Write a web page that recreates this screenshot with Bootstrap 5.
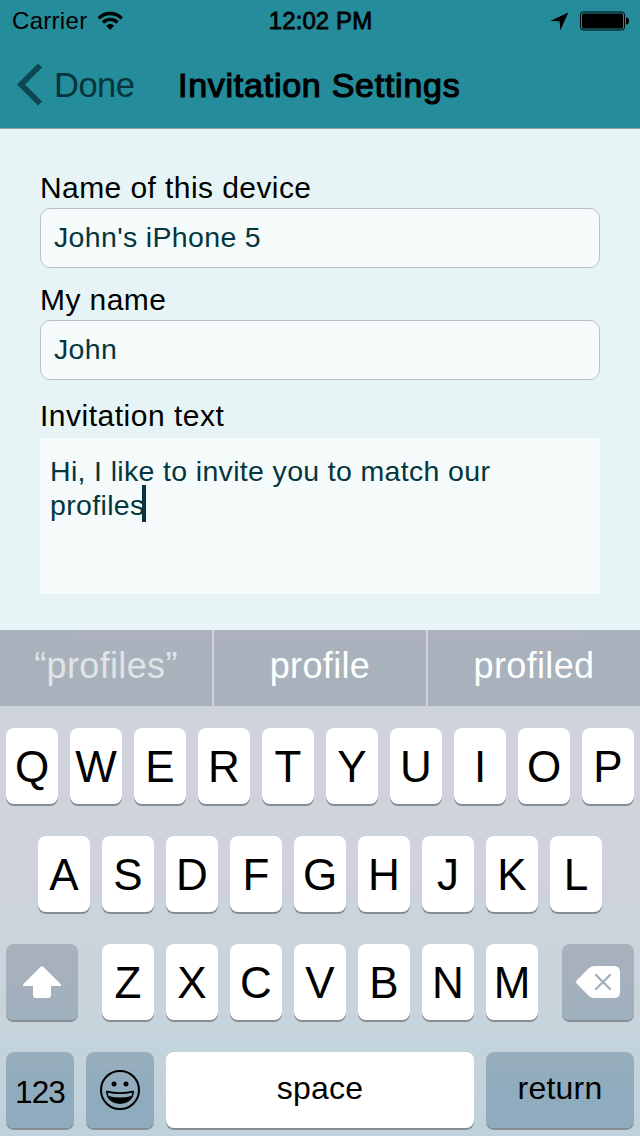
<!DOCTYPE html>
<html lang="en">
<head>
<meta charset="utf-8">
<meta name="viewport" content="width=device-width, initial-scale=1">
<title>Invitation Settings</title>
<link href="https://cdn.jsdelivr.net/npm/bootstrap@5.3.0/dist/css/bootstrap.min.css" rel="stylesheet">
<style>
  body { font-family: "Liberation Sans", Arial, sans-serif; color: #000; background: #e6f4f5; width: 640px; height: 1136px; overflow: hidden; }
  svg { display: block; flex: none; }
  .top-area { background: #258c9b; height: 129px; border-bottom: 1px solid #8fa3a6; }
  .status-bar { height: 41px; font-size: 24px; line-height: 41px; display: grid; grid-template-columns: 1fr auto 1fr; padding: 0 11px 0 12px; }
  .carrier { letter-spacing: .3px; }
  .clock { -webkit-text-stroke: .8px #000; letter-spacing: .1px; }
  .title-bar { height: 87px; padding: 0 0 0 16px; line-height: 84px; }
  .back-label { font-size: 34.5px; letter-spacing: -.5px; color: #06343c; width: 135px; padding-left: 11px; }
  .title-label { font-size: 34px; letter-spacing: .74px; -webkit-text-stroke: 1.2px #000; }
  .form-area { height: 501px; padding: 39px 40px 0; }
  .caption { font-size: 30px; line-height: 40px; height: 40px; letter-spacing: .42px; white-space: nowrap; }
  .caption.tall { height: 42px; letter-spacing: .5px; }
  .field, .field-area { background: #f5fbfa; color: #04363e; font-size: 28.5px; letter-spacing: .34px; }
  .field { height: 60px; line-height: 56px; border: 1px solid #b8c1c3; border-radius: 10px; padding: 0 13px; }
  .field-area { height: 156px; padding: 16px 10px; line-height: 34px; }
  .caret { position: absolute; width: 4px; height: 37px; background: #04363e; right: -1px; top: -4px; }
  .keyboard { height: 506px; background: linear-gradient(#cfd3db 0, #cfd3db 48%, #c9d3da 74%, #c4d4dc 81%, #bfd1da 100%); }
  .suggestions { height: 76px; gap: 2px; }
  .suggestion { flex: 1 1 0; background: linear-gradient(#acb1bd 0, #abb1bc 21px, #a8b2bc 25px); color: #fff; font-size: 36px; line-height: 71px; letter-spacing: .35px; text-align: center; }
  .suggestion.typed { color: #e2e3e5; background: linear-gradient(90deg, #a8b2bc 70px, transparent 74px), linear-gradient(#acb1bd 0, #abb1bc 21px, #a8b2bc 25px); }
  .suggestion.last { background: linear-gradient(270deg, #a8b2bc 54px, transparent 58px), linear-gradient(#acb1bd 0, #abb1bc 21px, #a8b2bc 25px); }
  .keys { padding: 22px 6px 0; gap: 32px; }
  .key-row { gap: 12px; height: 76px; }
  .key { width: 52px; height: 76px; background: #fff; border-radius: 8px; box-shadow: 0 2px 0 #888d92; font-size: 44px; line-height: 78px; display: flex; justify-content: center; flex: none; }
  .key.mod { width: 72px; background: linear-gradient(#a8b1bc, #a4b0bd 65%, #9db1bc); align-items: center; }
  .key.low { background: linear-gradient(#99aebc, #8facbe 50%, #8eacbd); }
  .key.narrow { width: 68px; }
  .key.wide { width: 148px; }
  .key.word { font-size: 32px; line-height: 73px; letter-spacing: .2px; }
  .key.number { font-size: 31.5px; line-height: 80px; letter-spacing: -.9px; }
</style>
</head>
<body>
<header class="top-area">
  <div class="status-bar">
    <div class="d-flex align-items-center">
      <span class="carrier">Carrier</span>
      <svg class="ms-2" width="30" height="20" viewBox="0 0 30 20">
        <g fill="none" stroke="#000" stroke-width="3.3">
          <path d="M3.7 7.3A16.2 16.2 0 0 1 26.7 7.3"/>
          <path d="M7.9 11.5A10.3 10.3 0 0 1 22.5 11.5"/>
        </g>
        <path d="M15.2 18.8L11.1 14.8A5.8 5.8 0 0 1 19.3 14.8Z"/>
      </svg>
    </div>
    <div class="clock">12:02 PM</div>
    <div class="d-flex align-items-center justify-content-end">
      <svg width="80" height="20" viewBox="549 10.5 80 20">
        <path d="M568.4 12L550.2 20.4L559.6 20.8L560.3 30Z"/>
        <rect x="580.5" y="11.5" width="44" height="18" rx="2.8" fill="none" stroke="#000"/>
        <rect x="582" y="13" width="41" height="15" rx="1.5"/>
        <path d="M626 17Q629 17.3 629 20.5T626 24Z"/>
      </svg>
    </div>
  </div>
  <nav class="title-bar d-flex align-items-center">
    <svg width="27" height="44" viewBox="0 0 27 44"><path d="M24 2.5L5 21.5L24 40.5" fill="none" stroke="#0d4751" stroke-width="5.8"/></svg>
    <span class="back-label">Done</span>
    <span class="title-label">Invitation Settings</span>
  </nav>
</header>

<main class="form-area d-flex flex-column">
  <div class="caption">Name of this device</div>
  <div class="field">John's iPhone 5</div>
  <div class="caption" style="margin-top:12px">My name</div>
  <div class="field">John</div>
  <div class="caption tall mt-3">Invitation text</div>
  <div class="field-area">Hi, I like to invite you to match our<br><span class="position-relative">profiles<i class="caret"></i></span></div>
</main>

<section class="keyboard">
  <div class="suggestions d-flex">
    <div class="suggestion typed">“profiles”</div>
    <div class="suggestion">profile</div>
    <div class="suggestion last">profiled</div>
  </div>
  <div class="keys d-flex flex-column">
    <div class="key-row d-flex justify-content-center">
      <div class="key">Q</div><div class="key">W</div><div class="key">E</div><div class="key">R</div><div class="key">T</div><div class="key">Y</div><div class="key">U</div><div class="key">I</div><div class="key">O</div><div class="key">P</div>
    </div>
    <div class="key-row d-flex justify-content-center">
      <div class="key">A</div><div class="key">S</div><div class="key">D</div><div class="key">F</div><div class="key">G</div><div class="key">H</div><div class="key">J</div><div class="key">K</div><div class="key">L</div>
    </div>
    <div class="key-row d-flex justify-content-between">
      <div class="key mod">
        <svg width="40" height="32" viewBox="0 0 40 32"><path d="M18.8 .7Q20 -.3 21.2 .7L38.6 18Q39.8 20 37.6 20H29V29Q29 32 26 32H14Q11 32 11 29V20H2.4Q.2 20 1.4 18Z" fill="#fff"/></svg>
      </div>
      <div class="d-flex key-row">
        <div class="key">Z</div><div class="key">X</div><div class="key">C</div><div class="key">V</div><div class="key">B</div><div class="key">N</div><div class="key">M</div>
      </div>
      <div class="key mod">
        <svg width="44" height="32" viewBox="0 0 44 32"><path d="M.7 14.5L12.5 2.5Q15 0 18 0H38Q44 0 44 6V26Q44 32 38 32H18Q15 32 12.5 29.5L.7 17.5Q-.6 16 .7 14.5Z" fill="#fff"/><path d="M20 9L34 23M34 9L20 23" stroke="#a4b0bd" stroke-width="2.4" stroke-linecap="round"/></svg>
      </div>
    </div>
    <div class="key-row d-flex">
      <div class="key low narrow number">123</div>
      <div class="key low narrow align-items-center">
        <svg width="40" height="40" viewBox="0 0 40 40">
          <circle cx="20" cy="20" r="19" fill="none" stroke="#000" stroke-width="2"/>
          <circle cx="14" cy="14" r="2.5"/><circle cx="26" cy="14" r="2.5"/>
          <path d="M6.8 21.6Q20 24.6 33.2 21.6C32.8 28.5 27.4 33 20 33S7.2 28.5 6.8 21.6Z" fill="none" stroke="#000" stroke-width="1.6" stroke-linejoin="round"/>
          <path d="M8.6 26Q20 29 31.4 26C29 31 25 33.4 20 33.4S11 31 8.6 26Z"/>
        </svg>
      </div>
      <div class="key word flex-fill">space</div>
      <div class="key low word wide">return</div>
    </div>
  </div>
</section>
<script src="https://cdn.jsdelivr.net/npm/bootstrap@5.3.0/dist/js/bootstrap.bundle.min.js"></script>
</body>
</html>
